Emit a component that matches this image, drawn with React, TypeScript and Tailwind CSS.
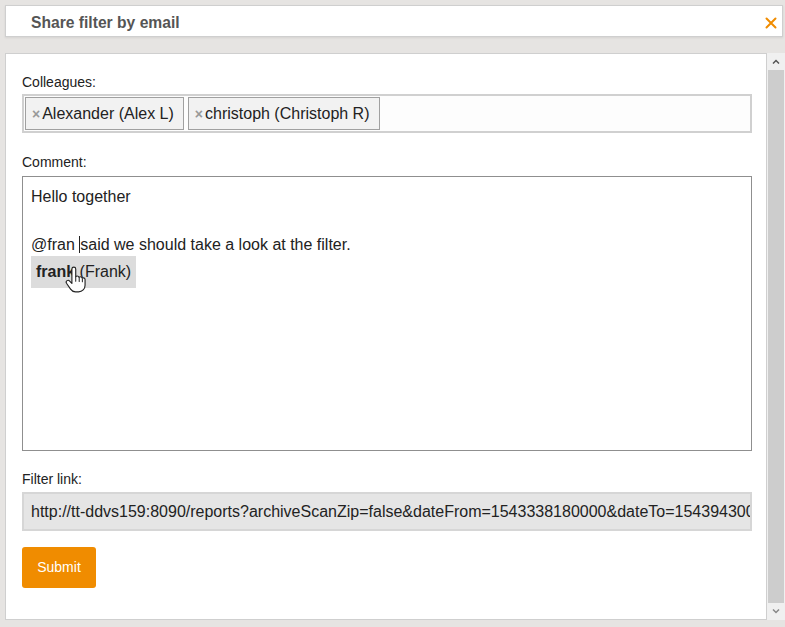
import { useState } from 'react'

const colleagues = ['Alexander (Alex L)', 'christoph (Christoph R)']

const filterLink =
  'http://tt-ddvs159:8090/reports?archiveScanZip=false&dateFrom=1543338180000&dateTo=1543943000000&status=all'

function HandCursor() {
  return (
    <svg width="23" height="27" viewBox="0 0 20 24" className="absolute left-[33px] top-[10px]">
      <path
        d="M8.5 1c1 0 1.7.7 1.7 1.7V9.5c.3-.4.8-.6 1.3-.6.8 0 1.4.5 1.6 1.2.3-.3.7-.5 1.2-.5.8 0 1.4.5 1.6 1.2.3-.2.6-.3 1-.3.9 0 1.6.7 1.6 1.6V17c0 3.5-2.5 6-5.8 6H10c-2 0-3.4-.9-4.4-2.4L2 15.3c-.5-.8-.3-1.8.5-2.3.8-.5 1.8-.2 2.3.5l2 2V2.7C6.8 1.7 7.5 1 8.5 1z"
        fill="#fff"
        stroke="#222"
        strokeWidth="1"
        strokeLinejoin="round"
      />
      <path d="M10.2 9.5v4M13.3 10.5v3.2M16.1 11.4v2.6" stroke="#222" strokeWidth="0.9" strokeLinecap="round" />
    </svg>
  )
}

export default function App() {
  const [tags, setTags] = useState(colleagues)

  return (
    <div className="w-[785px] h-[627px] overflow-hidden bg-[#e6e4e2] font-['Liberation_Sans',Arial,sans-serif] text-[#222]">
      <div className="ml-[5px] mr-[2px] mt-[5px] h-[32px] bg-white border border-[#cfcfcf] flex items-center justify-between pl-[25px] pr-[5px] shadow-[0_1px_2px_rgba(0,0,0,0.08)]">
        <span className="inline-block origin-left scale-x-[0.92] mt-[3px] font-bold text-[17px] text-[#555]">
          Share filter by email
        </span>
        <svg width="12" height="12" viewBox="0 0 12 12" className="mt-[3px]">
          <path d="M1.5 1.5l9 9M10.5 1.5l-9 9" stroke="#f08c00" strokeWidth="2" strokeLinecap="round" />
        </svg>
      </div>

      <div className="ml-[5px] mt-[16px] h-[567px] flex">
        <div className="flex-1 min-w-0 bg-white border border-[#cfcfcf] pt-[20px] pl-[16px] pr-[14px] text-[14px]">
          <div className="mb-[4px] leading-[16px]">Colleagues:</div>
          <div className="h-[39px] border-2 border-[#d0d0d0] bg-[#fdfdfd] flex items-center gap-[4px] px-[1px]">
            {tags.map(t => (
              <div
                key={t}
                className="h-[33px] border border-[#a0a0a0] bg-[#f2f2f2] flex items-center pl-[6px] pr-[9px] text-[16px]"
              >
                <button
                  onClick={() => setTags(tags.filter(x => x !== t))}
                  className="text-[#999] text-[14px] font-bold leading-none mr-[2px]"
                >
                  ×
                </button>
                {t}
              </div>
            ))}
          </div>

          <div className="mt-[21px] mb-[6px] leading-[16px]">Comment:</div>
          <div className="h-[275px] border border-[#8f8f8f] px-[8px] pt-[8px] text-[16px] leading-[24px]">
            <div>Hello together</div>
            <div>&nbsp;</div>
            <div>
              @fran <span className="border-l border-[#222]">said we should take a look at the filter.</span>
            </div>
            <div className="relative inline-block bg-[#dcdcdc] px-[5px] py-[4px] leading-[24px] -mt-[1px]">
              <b>frank</b> (Frank)
              <HandCursor />
            </div>
          </div>

          <div className="mt-[20px] mb-[5px] leading-[16px]">Filter link:</div>
          <div className="h-[39px] border-2 border-[#d6d6d6] bg-[#e5e5e5] flex items-center pl-[7px] overflow-hidden whitespace-nowrap text-[16px]">
            {filterLink}
          </div>

          <button className="mt-[16px] w-[74px] h-[41px] rounded-[3px] bg-[#f08c00] text-white text-[14px]">
            Submit
          </button>
        </div>

        <div className="w-[18px] bg-[#f0f0f0] flex flex-col">
          <div className="h-[17px] flex items-center justify-center">
            <svg width="8" height="5" viewBox="0 0 8 5">
              <path d="M1 4.5L4 1.5l3 3" stroke="#555" strokeWidth="1.5" fill="none" />
            </svg>
          </div>
          <div className="flex-1 bg-[#cdcdcd] mx-[1px]" />
          <div className="h-[17px] flex items-center justify-center">
            <svg width="8" height="5" viewBox="0 0 8 5">
              <path d="M1 0.5L4 3.5l3-3" stroke="#888" strokeWidth="1.5" fill="none" />
            </svg>
          </div>
        </div>
      </div>
    </div>
  )
}
